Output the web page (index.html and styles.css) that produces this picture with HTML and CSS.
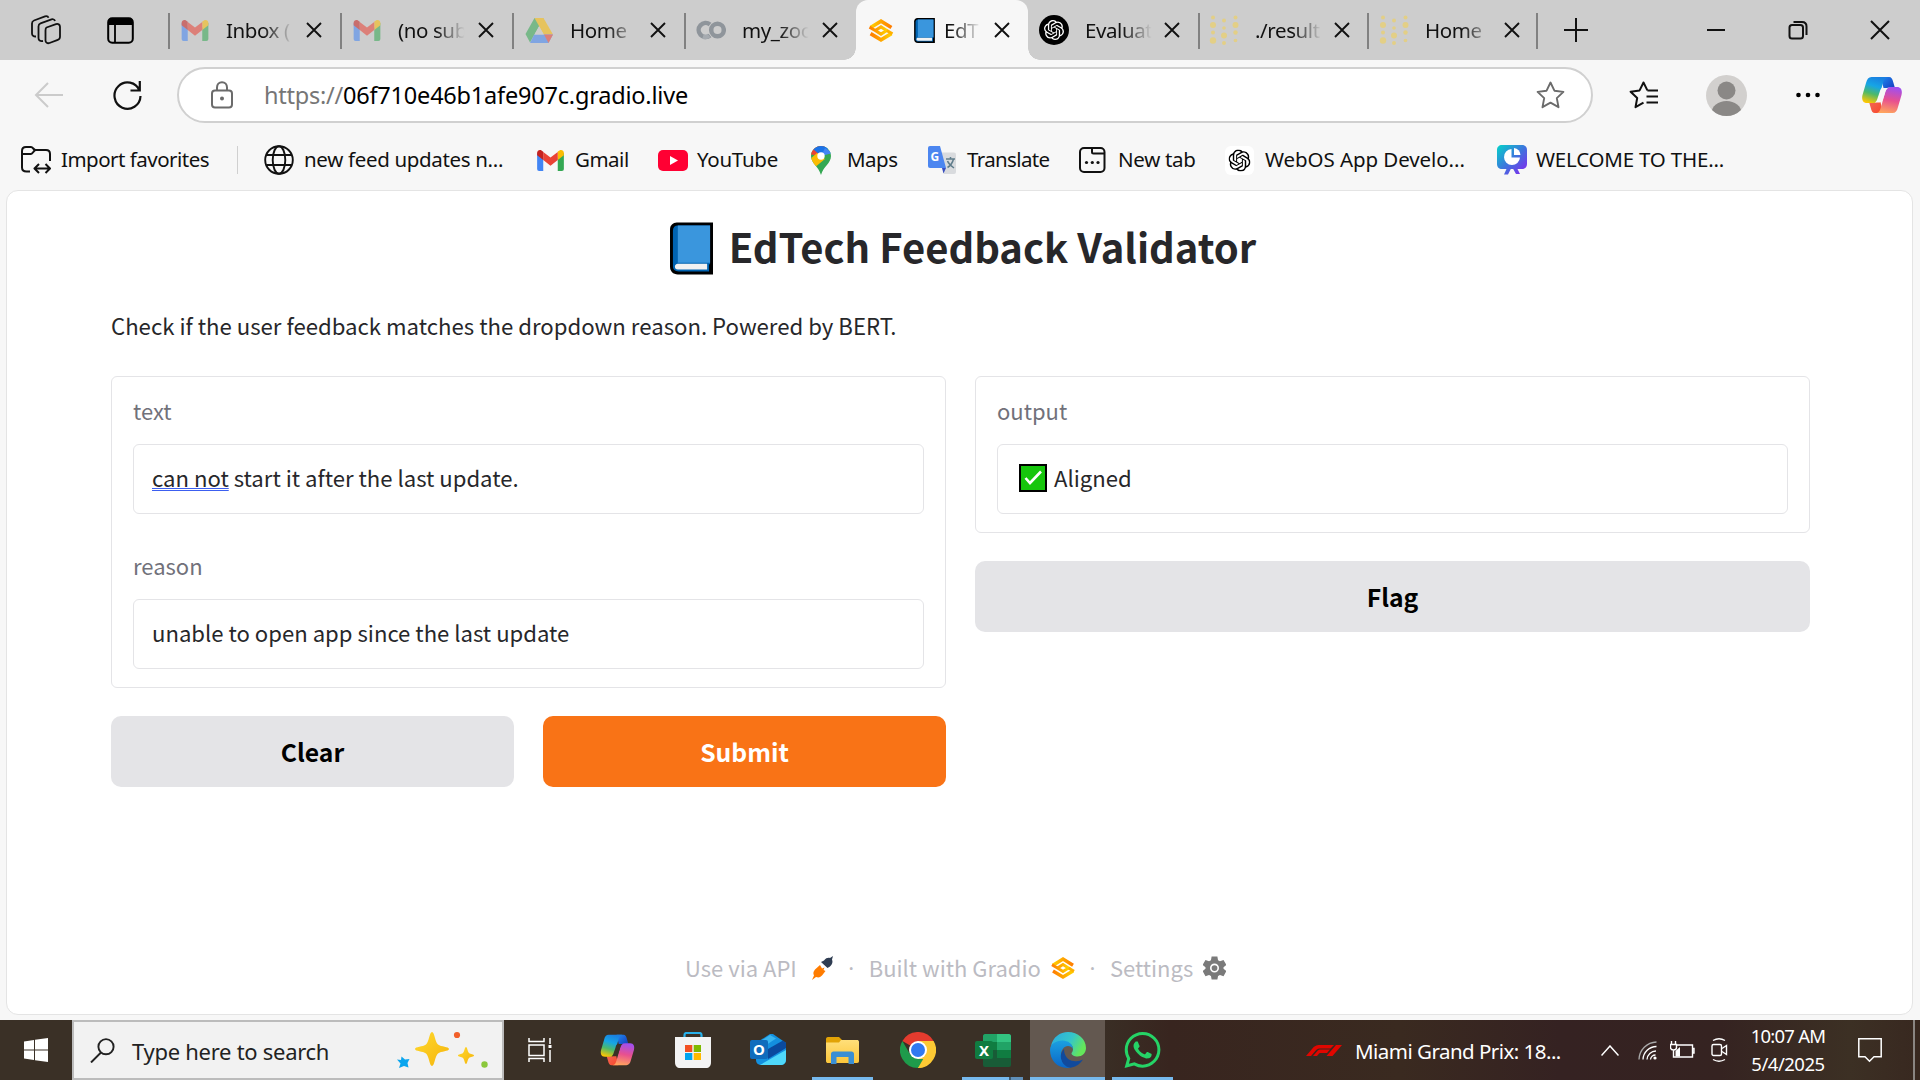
FILE: index.html
```html
<!DOCTYPE html>
<html lang="en">
<head>
<meta charset="utf-8">
<title>EdTech Feedback Validator</title>
<link rel="stylesheet" href="styles.css">
</head>
<body>
<svg class="defs" width="0" height="0">
  <defs>
    <linearGradient id="cp1" x1="0.6" y1="0" x2="0.3" y2="1"><stop offset="0" stop-color="#1a7fe0"/><stop offset=".35" stop-color="#16a5e6"/><stop offset=".65" stop-color="#4cb96a"/><stop offset="1" stop-color="#fbc704"/></linearGradient>
    <linearGradient id="cp2" x1="0.6" y1="0" x2="0.4" y2="1"><stop offset="0" stop-color="#a04ff0"/><stop offset=".5" stop-color="#e8508f"/><stop offset="1" stop-color="#ffa45e"/></linearGradient>
    <linearGradient id="cp3" x1="0" y1="0" x2="1" y2="1"><stop offset="0" stop-color="#1f8af0"/><stop offset="1" stop-color="#1531b8"/></linearGradient>
    <linearGradient id="cp4" x1="0" y1="0" x2="1" y2="1"><stop offset="0" stop-color="#f26a5a"/><stop offset="1" stop-color="#f8462a"/></linearGradient>
    <linearGradient id="pr" x1="0" y1="0" x2="1" y2="1"><stop offset="0" stop-color="#04d3c9"/><stop offset=".5" stop-color="#3d74dd"/><stop offset="1" stop-color="#8a22f0"/></linearGradient>
    <linearGradient id="gr" x1="0" y1="0" x2="1" y2="0"><stop offset="0" stop-color="#ff7c00"/><stop offset="1" stop-color="#ffd000"/></linearGradient>
    <linearGradient id="gr2" x1="0" y1="0" x2="1" y2="0"><stop offset="0" stop-color="#ffd000"/><stop offset="1" stop-color="#ff7c00"/></linearGradient>
    <linearGradient id="ed1" x1="0" y1="0" x2="1" y2=".4"><stop offset="0" stop-color="#2aa9e0"/><stop offset=".6" stop-color="#35c6c9"/><stop offset="1" stop-color="#64e65b"/></linearGradient>
    <linearGradient id="ed2" x1="0" y1="0" x2="0" y2="1"><stop offset="0" stop-color="#1ba0e0"/><stop offset="1" stop-color="#0a66c8"/></linearGradient>
    <linearGradient id="sp" x1="0" y1="0" x2="1" y2="1"><stop offset="0" stop-color="#ffd92e"/><stop offset="1" stop-color="#f5b40c"/></linearGradient>
    <linearGradient id="fo" x1="0" y1="0" x2="0" y2="1"><stop offset="0" stop-color="#ffdf7a"/><stop offset="1" stop-color="#fcc63a"/></linearGradient>
    <symbol id="gmail" viewBox="0 0 28 22"><path d="M0 3v17a2 2 0 0 0 2 2h4.400V8z" fill="#4285f4"/><path d="M21.600 8v14H26a2 2 0 0 0 2-2V3z" fill="#34a853"/><path d="M21.600 1.600V10.600L28 5.500V3c0-2.500-2.600-3.700-4.600-2.500z" fill="#fbbc04"/><path d="M6.400 10.600V2l7.600 5.800L21.600 2v8.600L14 16.500z" fill="#ea4335"/><path d="M0 3v2.500l6.400 5.100V1.900L4.600.5C2.600-.7 0 .5 0 3z" fill="#c5221f"/></symbol>
    <symbol id="x" viewBox="0 0 16 16"><path d="M1 1l14 14M15 1L1 15" fill="none" stroke="#111" stroke-width="1.900"/></symbol>
    <symbol id="copilot" viewBox="0 0 40 38"><path d="M19 1h8c2.500 0 3.500 2 4.200 5l1.600 5.500h-5c-3 0-4.500 1.500-5.500 4z" fill="url(#cp3)"/><path d="M21 37h-8c-2.500 0-3.500-2-4.200-5l-1.600-5.500h5c3 0 4.500-1.500 5.500-4z" fill="url(#cp4)"/><path d="M9.500 1H26c-3 0-4 2.500-5 6l-4 14c-1 4-2.500 6-6 6H5c-4.500 0-5.500-4-4.500-8L4 7c1-4 2.500-6 5.500-6z" fill="url(#cp1)"/><path d="M30.500 37H14c3 0 4-2.500 5-6l4-14c1-4 2.500-6 6-6h6c4.500 0 5.500 4 4.500 8L36 31c-1 4-2.500 6-5.500 6z" fill="url(#cp2)"/><path d="M20.500 12H26c-1.700 1-2.400 3-3 5l-2 6c-.7 2-1.800 3.500-3.500 3.500H13c1.500-1 2.200-3 2.800-5l1.700-5c.7-2.500 1.500-4.500 3-4.500z" fill="currentColor"/></symbol>
    <symbol id="gradio" viewBox="0 0 24 24"><path d="M2 9.200L12 3l10 6.200" fill="none" stroke="url(#gr2)" stroke-width="3.400"/><path d="M22 15L12 21 2 15" fill="none" stroke="url(#gr)" stroke-width="3.400"/><path d="M1 8.800L6.500 12 12 8.500 17.500 12 12 15.500 6.500 12" fill="none" stroke="url(#gr)" stroke-width="2.900"/><path d="M23 15.200L17.500 12" fill="none" stroke="#ffb000" stroke-width="2.900"/></symbol>
    <symbol id="openai" viewBox="0 0 24 24"><path d="M22.2819 9.8211a5.9847 5.9847 0 0 0-.5157-4.9108 6.0462 6.0462 0 0 0-6.5098-2.9A6.0651 6.0651 0 0 0 4.9807 4.1818a5.9847 5.9847 0 0 0-3.9977 2.9 6.0462 6.0462 0 0 0 .7427 7.0966 5.98 5.98 0 0 0 .511 4.9107 6.051 6.051 0 0 0 6.5146 2.9001A5.9847 5.9847 0 0 0 13.2599 24a6.0557 6.0557 0 0 0 5.7718-4.2058 5.9894 5.9894 0 0 0 3.9977-2.9001 6.0557 6.0557 0 0 0-.7475-7.0729zm-9.022 12.6081a4.4755 4.4755 0 0 1-2.8764-1.0408l.1419-.0804 4.7783-2.7582a.7948.7948 0 0 0 .3927-.6813v-6.7369l2.02 1.1686a.071.071 0 0 1 .038.052v5.5826a4.504 4.504 0 0 1-4.4945 4.4944zm-9.6607-4.1254a4.4708 4.4708 0 0 1-.5346-3.0137l.142.0852 4.783 2.7582a.7712.7712 0 0 0 .7806 0l5.8428-3.3685v2.3324a.0804.0804 0 0 1-.0332.0615L9.74 19.9502a4.4992 4.4992 0 0 1-6.1408-1.6464zM2.3408 7.8956a4.485 4.485 0 0 1 2.3655-1.9728V11.6a.7664.7664 0 0 0 .3879.6765l5.8144 3.3543-2.0201 1.1685a.0757.0757 0 0 1-.071 0l-4.8303-2.7865A4.504 4.504 0 0 1 2.3408 7.872zm16.5963 3.8558L13.1038 8.364 15.1192 7.2a.0757.0757 0 0 1 .071 0l4.8303 2.7913a4.4944 4.4944 0 0 1-.6765 8.1042v-5.6772a.79.79 0 0 0-.407-.667zm2.0107-3.0231l-.142-.0852-4.7735-2.7818a.7759.7759 0 0 0-.7854 0L9.409 9.2297V6.8974a.0662.0662 0 0 1 .0284-.0615l4.8303-2.7866a4.4992 4.4992 0 0 1 6.6802 4.66zM8.3065 12.863l-2.02-1.1638a.0804.0804 0 0 1-.038-.0567V6.0742a4.4992 4.4992 0 0 1 7.3757-3.4537l-.142.0805L8.704 5.459a.7948.7948 0 0 0-.3927.6813zm1.0976-2.3654l2.602-1.4998 2.6069 1.4998v2.9994l-2.5974 1.4997-2.6067-1.4997Z"/></symbol>
    <symbol id="dots" viewBox="0 0 28 30"><g fill="#e3cf86"><circle cx="3" cy="2.500" r="2"/><circle cx="3" cy="10" r="3"/><circle cx="3" cy="17.500" r="2"/><circle cx="3" cy="25.500" r="3.200"/><circle cx="14" cy="5.500" r="2"/><circle cx="14" cy="13" r="1.800"/><circle cx="14" cy="20.500" r="3"/><circle cx="14" cy="28" r="2"/><circle cx="25.500" cy="2.500" r="2"/><circle cx="25.500" cy="10" r="3"/><circle cx="25.500" cy="17.500" r="2.200"/><circle cx="25.500" cy="25.500" r="1.800"/></g></symbol>
    <symbol id="book" viewBox="0 0 44 53"><path d="M7 0h37v53H8C3 53 0 50 0 45V7C0 3 3 0 7 0z" fill="#000"/><path d="M8 3h33v39l-1 1v7H9c-4 0-6-2-6-5V8c0-3 2-5 5-5z" fill="#0063b1"/><path d="M8 3h33v38H9c-1 0-1 0-1 1z" fill="#3a96dd"/><path d="M8 42h30v6H8c-4 0-4-6 0-6z" fill="#f2f2f2"/></symbol>
  </defs>
</svg>

<header class="browser">
  <div class="tabstrip">
    <div class="tabtools">
      <svg width="30" height="30" viewBox="0 0 30 30" fill="none" stroke="#111" stroke-width="1.800" stroke-linejoin="round"><path d="M15.500 12.500l9.500-3.300c2-.7 4 .3 4 2.500v10c0 1.500-.8 2.600-2.200 3.100l-8.300 3.200c-2 .8-4-.4-4-2.500v-10c0-1.400 0-2.500 1-3z"/><path d="M12 26c-3 .6-4.500-.8-4.500-3V11.500c0-1.500.6-2.600 2-3.100l11-4c1.500-.5 3 .1 3.500 1.600"/><path d="M5 21.500c-2.500.2-4-1-4-3V8.500C1 7 1.600 6 3 5.500L14 1.300c1.600-.5 3 0 3.500 1.500"/></svg>
      <svg width="27" height="27" viewBox="0 0 27 27"><rect x="1.200" y="1.200" width="24.600" height="24.600" rx="4" fill="none" stroke="#000" stroke-width="2"/><path d="M1 8V5c0-2.500 1.500-4 4-4h17c2.500 0 4 1.500 4 4v3z"/><path d="M8 8v18" stroke="#000" stroke-width="1.800"/></svg>
    </div>
    <div class="tabs">
      <div class="tab"><svg class="fav dim" width="28" height="21"><use href="#gmail"/></svg><span class="tt">Inbox (</span><svg class="close"><use href="#x"/></svg></div>
      <div class="tab"><svg class="fav dim" width="28" height="21"><use href="#gmail"/></svg><span class="tt">(no sub</span><svg class="close"><use href="#x"/></svg></div>
      <div class="tab"><svg class="fav dim" width="28" height="25" viewBox="0 0 28 25"><path d="M9.500 0h9L14 8.500 5 24.500.5 16z" fill="#34a853"/><path d="M18.500 0L28 16.500H18.800L9.500 0z" fill="#fbbc04"/><path d="M9.200 16.500H28L23.500 25H5z" fill="#4285f4"/><path d="M19 16.500h9L23.500 25z" fill="#ea4335"/><path d="M14 8.500l4.700 8H9.400z" fill="#cdcdcd"/></svg><span class="tt">Home</span><svg class="close"><use href="#x"/></svg></div>
      <div class="tab"><svg class="fav" width="30" height="20" viewBox="0 0 30 20" fill="none" stroke-width="4.500"><path d="M14 4.500A7 7 0 1 0 14 15.500" stroke="#8f959b"/><circle cx="21.500" cy="10" r="6.300" stroke="#8f959b"/><path d="M7 16.500a6.500 6.500 0 0 0 6-1" stroke="#a6abb0"/></svg><span class="tt">my_zoo</span><svg class="close"><use href="#x"/></svg></div>
      <div class="tab active"><svg class="fav" width="26" height="25"><use href="#gradio"/></svg><span class="tt"><svg class="tbook" width="21" height="25"><use href="#book"/></svg>EdT</span><svg class="close"><use href="#x"/></svg></div>
      <div class="tab w2 first"><svg class="fav" width="30" height="30" viewBox="0 0 30 30"><circle cx="15" cy="15" r="15"/><use href="#openai" x="5" y="5" width="20" height="20" fill="#fff"/></svg><span class="tt">Evaluat</span><svg class="close"><use href="#x"/></svg></div>
      <div class="tab w2"><svg class="fav" width="28" height="30"><use href="#dots"/></svg><span class="tt">./result</span><svg class="close"><use href="#x"/></svg></div>
      <div class="tab w2 last"><svg class="fav" width="28" height="30"><use href="#dots"/></svg><span class="tt">Home</span><svg class="close"><use href="#x"/></svg></div>
    </div>
    <svg class="plus" width="26" height="26" viewBox="0 0 26 26"><path d="M13 1v24M1 13h24" stroke="#111" stroke-width="2"/></svg>
    <div class="winctl">
      <svg width="20" height="20" viewBox="0 0 20 20"><path d="M1 10h18" stroke="#111" stroke-width="2"/></svg>
      <svg width="20" height="20" viewBox="0 0 20 20" fill="none" stroke="#111" stroke-width="2"><rect x="1.500" y="5" width="13.500" height="13.500" rx="2.500"/><path d="M5.500 2h8.500c3 0 4.500 1.500 4.500 4.500V15"/></svg>
      <svg width="20" height="20" viewBox="0 0 20 20"><path d="M1 1l18 18M19 1L1 19" stroke="#111" stroke-width="2"/></svg>
    </div>
  </div>

  <div class="toolbar">
    <svg class="back" width="30" height="26" viewBox="0 0 30 26" fill="none" stroke="#cbcbcb" stroke-width="2"><path d="M29 13H2M14 1L2 13l12 12"/></svg>
    <svg class="reload" width="30" height="30" viewBox="0 0 30 30" fill="none" stroke="#111" stroke-width="2.200"><path d="M27.500 10.500A13 13.200 0 1 0 28.500 16M27.800 1v9.500H18.500"/></svg>
    <div class="urlbar">
      <svg width="22" height="28" viewBox="0 0 22 28" fill="none" stroke="#6b6b6b" stroke-width="2"><rect x="1" y="9.500" width="20" height="17" rx="3"/><path d="M6 9V6.500C6 3.500 8 1.200 11 1.200s5 2.300 5 5.300V9"/><circle cx="11" cy="17.500" r="1" fill="#6b6b6b"/></svg>
      <span class="url"><span class="scheme">https://</span><span class="host">06f710e46b1afe907c.gradio.live</span></span>
      <svg width="29" height="28" viewBox="0 0 29 28" fill="none" stroke="#6b6b6b" stroke-width="1.900" stroke-linejoin="round"><path d="M14.500 1.500l3.900 8.200 9 1.200-6.600 6.200 1.700 9.100-8-4.500-8 4.500 1.700-9.100L1.600 10.900l9-1.200z"/></svg>
    </div>
    <svg class="favs" width="30" height="28" viewBox="0 0 30 28" fill="none" stroke="#111" stroke-width="2" stroke-linejoin="round"><path d="M18.400 9.400L14.500 1.500l-3.900 7.900-9 1.300 6.600 6.300-1.700 9.200 8-4.600M18.400 9.400H29M17.500 15.500H29M17.500 21.500H29"/></svg>
    <svg class="avatar" width="41" height="41" viewBox="0 0 41 41"><defs><clipPath id="av"><circle cx="20.500" cy="20.500" r="20.500"/></clipPath></defs><g clip-path="url(#av)"><rect width="41" height="41" fill="#d2d0ce"/><circle cx="20.500" cy="15.500" r="9" fill="#8a8886"/><ellipse cx="20.500" cy="38" rx="15" ry="12" fill="#8a8886"/></g></svg>
    <svg class="more" width="24" height="6" viewBox="0 0 24 6"><circle cx="2.500" cy="3" r="2.300"/><circle cx="12" cy="3" r="2.300"/><circle cx="21.500" cy="3" r="2.300"/></svg>
    <svg class="cop" width="40" height="38"><use href="#copilot"/></svg>
  </div>

  <nav class="bookmarks">
    <a class="bm b0"><svg width="30" height="28" viewBox="0 0 30 28" fill="none" stroke="#111" stroke-width="2" stroke-linejoin="round"><path d="M9 25.500H5.500c-2.500 0-4.500-1.500-4.500-4V5c0-2.500 1.500-4 4-4h5c2 0 2.500 3 4.500 3H25c2.500 0 4 1.500 4 4v7"/><path d="M1 8h9c2 0 2.500-3.500 4.500-4M14 22.500h14M18 18l-4.500 4.500L18 27M24.500 18l4.500 4.500L24.500 27"/></svg><span>Import favorites</span></a>
    <span class="bsep"></span>
    <a class="bm b1"><svg width="30" height="30" viewBox="0 0 30 30" fill="none" stroke="#111" stroke-width="1.900"><circle cx="15" cy="15" r="13.800"/><ellipse cx="15" cy="15" rx="6.300" ry="13.800"/><path d="M2.500 10h25M2.500 20h25"/></svg><span>new feed updates n...</span></a>
    <a class="bm b2"><svg width="27" height="21"><use href="#gmail"/></svg><span>Gmail</span></a>
    <a class="bm b3"><svg width="30" height="21" viewBox="0 0 30 21"><rect width="30" height="21" rx="5" fill="#f03"/><path d="M12 6l8 4.500-8 4.500z" fill="#fff"/></svg><span>YouTube</span></a>
    <a class="bm b4"><svg width="20" height="29" viewBox="0 0 20 29"><defs><clipPath id="pin"><path d="M10 0c5.500 0 10 4.500 10 10 0 7.500-7.500 10-10 19C7.500 20 0 17.500 0 10 0 4.500 4.500 0 10 0z"/></clipPath></defs><g clip-path="url(#pin)"><rect width="20" height="29" fill="#34a853"/><path d="M0 0h14L10 10-4 8z" fill="#ea4335"/><path d="M2 3L10-2l8 4-8 8z" fill="#1a73e8"/><path d="M14 2l8 5-12 3z" fill="#4285f4"/><path d="M-2 14L6 7l8 6-11 9z" fill="#fbbc04"/></g><circle cx="10" cy="10" r="3.700" fill="#fff"/></svg><span>Maps</span></a>
    <a class="bm b5"><svg width="28" height="28" viewBox="0 0 28 28"><path d="M10 6.500h16a2 2 0 0 1 2 2V26a2 2 0 0 1-2 2H16z" fill="#d9dbde"/><path d="M14 22h4l-2.500 5.500z" fill="#3a4fbf"/><path d="M2 0h10l6 22H2a2 2 0 0 1-2-2V2a2 2 0 0 1 2-2z" fill="#4c86f0"/><text x="2.500" y="15" class="glyph" font-size="12" fill="#fff">G</text><path d="M18 13h9M22.500 11v2M25.500 13c-1 4-3.500 7-6 8.500M19.500 15c1 2.500 3.500 5 6.500 7" stroke="#607d8b" stroke-width="1.500" fill="none"/></svg><span>Translate</span></a>
    <a class="bm b6"><svg width="27" height="26" viewBox="0 0 27 26" fill="none" stroke="#111" stroke-width="2"><rect x="1" y="1" width="24.500" height="24" rx="4"/><path d="M13 1v4c0 1 .5 1.500 1.500 1.500h11"/><g fill="#111" stroke="none"><circle cx="7.500" cy="15.500" r="1.600"/><circle cx="13.300" cy="15.500" r="1.600"/><circle cx="19" cy="15.500" r="1.600"/></g></svg><span>New tab</span></a>
    <a class="bm b7"><svg width="29" height="29" viewBox="0 0 29 29"><rect width="29" height="29" rx="6" fill="#fff"/><use href="#openai" x="3.500" y="3.500" width="22" height="22"/></svg><span>WebOS App Develo...</span></a>
    <a class="bm b8"><svg width="30" height="30" viewBox="0 0 30 30"><path d="M5 0h20c3 0 5 2 5 5v14c0 3-2 5-5 5h-4.500l2.500 5h-4l-2.800-5h-2.400L11 29.500H7L9.500 24H5c-3 0-5-2-5-5V5c0-3 2-5 5-5z" fill="url(#pr)"/><path d="M14.500 4v8.500H23a8 8 0 1 1-8.500-8.500z" fill="#fff"/><path d="M17 3a7 7 0 0 1 6.500 7H17z" fill="#fff"/></svg><span>WELCOME TO THE...</span></a>
  </nav>
</header>

<main class="page">
  <h1 class="title"><svg width="43" height="53" preserveAspectRatio="none"><use href="#book"/></svg><span>EdTech Feedback Validator</span></h1>
  <p class="desc">Check if the user feedback matches the dropdown reason. Powered by BERT.</p>
  <div class="cols">
    <section class="col">
      <div class="panel">
        <div class="field"><label>text</label><div class="input"><span><span class="grammar">can not</span> start it after the last update.</span></div></div>
        <div class="field"><label>reason</label><div class="input"><span>unable to open app since the last update</span></div></div>
      </div>
      <div class="btns"><button class="btn">Clear</button><button class="btn primary">Submit</button></div>
    </section>
    <section class="col">
      <div class="panel">
        <div class="field"><label>output</label><div class="input"><svg class="check" width="28" height="28" viewBox="0 0 28 28"><rect x="1" y="1" width="26" height="26" fill="#16c60c" stroke="#000" stroke-width="2"/><path d="M6.500 14l4.500 5L22 7.500" fill="none" stroke="#fff" stroke-width="2.600"/></svg><span>Aligned</span></div></div>
      </div>
      <button class="btn">Flag</button>
    </section>
  </div>
  <footer class="foot">
    <span>Use via API</span>
    <svg class="f1" width="22" height="24" viewBox="0 0 22 24"><path d="M12 4.500c2-2.500 4-3 6-2.500L21 0l-1 3.500c1 2.500.5 4.500-2 7l-2.500 1.500L9 6z" fill="#2f3d52"/><path d="M8 9l-5 4.500c-2 2.500-2 4-1 6L0 24l4-3c2.500 1 4 .5 6-1.500l3.500-4.500-2-1 1-2.500-2.500 1z" fill="#ff7c00"/></svg>
    <span class="dot">·</span>
    <span>Built with Gradio</span>
    <svg class="f2" width="24" height="24"><use href="#gradio"/></svg>
    <span class="dot">·</span>
    <span>Settings</span>
    <svg class="f3" width="23" height="24" viewBox="0 0 24 24"><path fill="#7a7a7a" fill-rule="evenodd" d="M9 0h6l.7 3.800 2 1.100L21.400 3.600l3 5.200-3 2.500v1.500l3 2.500-3 5.200-3.700-1.300-2 1.100L15 24H9l-.7-3.700-2-1.100-3.700 1.300-3-5.200 3-2.500v-1.500l-3-2.500 3-5.200 3.700 1.300 2-1.100zM12 7.300a4.700 4.700 0 1 0 0 9.400 4.700 4.700 0 0 0 0-9.400z"/><circle cx="12" cy="12" r="3" fill="#7a7a7a"/></svg>
  </footer>
</main>

<div class="taskbar">
  <div class="start"><svg width="24" height="24" viewBox="0 0 24 24" fill="#fff"><path d="M0 3.400l10-1.400v9.500H0zM11 1.800L24 0v11.500H11zM0 12.500h10V22L0 20.600zM11 12.500h13V24l-13-1.800z"/></svg></div>
  <div class="search"><svg width="25" height="25" viewBox="0 0 25 25" fill="none" stroke="#222" stroke-width="1.900"><circle cx="16" cy="8.700" r="7.600"/><path d="M11 14.500L1 24.500"/></svg><span>Type here to search</span>
    <svg class="sparkles" width="92" height="38" viewBox="0 0 92 38"><path d="M35 1c2.500 0 3 10 6 12.500S52 15.500 52 18s-8 2-11 4.500S37.500 35 35 35s-3-10-6-12.500S18 20.500 18 18s8-2 11-4.500S32.500 1 35 1z" fill="url(#sp)"/><path d="M69 16c1.300 0 1.500 4.500 3 6s5 1 5 2.500-3.500 1-5 2.500-1.700 6-3 6-1.500-4.500-3-6-5-1-5-2.500 3.500-1 5-2.500 1.700-6 3-6z" fill="url(#sp)"/><path d="M4.500 25.500l3.500 3 4.500-.5-2 4 1 4.500-4.500-1.500-5 2 1.500-4.500L0 28.500l4 .5z" fill="#0aa5ee"/><circle cx="60" cy="4" r="3.100" fill="#f2602a"/><circle cx="87.500" cy="33.500" r="3.200" fill="#8bc83c"/></svg>
  </div>
  <div class="apps">
    <span class="app"><svg width="24" height="24" viewBox="0 0 24 24" fill="none" stroke="#fff" stroke-width="1.500"><path d="M1 0v3.500h15V0M1 24v-3.500h15V24"/><rect x="1" y="7" width="15" height="10.500"/><path d="M22 0v6M22 12v12"/><path d="M20.500 8.500h3" stroke-width="3"/></svg></span>
    <span class="app"><svg class="cop2" width="35" height="32"><use href="#copilot"/></svg></span>
    <span class="app"><svg width="36" height="36" viewBox="0 0 36 36"><path d="M9.500 6V3c0-1.500.5-2 2-2h13c1.500 0 2 .5 2 2v3" fill="none" stroke="#27b0ea" stroke-width="2.200"/><path d="M0 5h36v25c0 4-2 6-5 6H5c-3 0-5-2-5-6z" fill="#f3f3f3"/><path d="M10 13h7.300v7H10z" fill="#f25022"/><path d="M18.700 13H26v7h-7.300z" fill="#7fba00"/><path d="M10 21h7.300v7H10z" fill="#00a4ef"/><path d="M18.700 21H26v7h-7.300z" fill="#ffb900"/></svg></span>
    <span class="app"><svg width="36" height="32" viewBox="0 0 36 32"><path d="M6 9L20 0c1-.5 2-.5 3 0l13 9v16c0 4-2 6-6 6H12c-4 0-6-2-6-5z" fill="#1390df"/><path d="M6 10L20 1l6 3.500L10 15z" fill="#39b5f0"/><path d="M18 15l15-8.500L36 9v5L18 25z" fill="#0a4a9e"/><path d="M10 31l26-15v9c0 4-2 6-6 6z" fill="#4fd8fa"/><rect y="6" width="18" height="19" rx="2" fill="#0f6cbd"/><text x="9" y="21" text-anchor="middle" class="glyph" font-size="15" fill="#fff">O</text></svg></span>
    <span class="app open"><svg width="33" height="27" viewBox="0 0 33 27"><path d="M0 2C0 1 .5 0 2 0h11l3 3v5H0z" fill="#e2a306"/><path d="M0 5.500h13l2-2.500h16c1 0 2 .5 2 2v19c0 1-.5 2-2 2H2c-1 0-2-.5-2-2z" fill="url(#fo)"/><path d="M5 27V17c0-1.500 1-2.500 2.500-2.500h18c1.500 0 2.500 1 2.500 2.500v10h-5.500v-7h-12v7z" fill="#3a8fd4"/></svg></span>
    <span class="app"><svg width="36" height="36" viewBox="0 0 36 36"><path d="M18 18L2.400 9A18 18 0 0 1 33.600 9z" fill="#e33b2e"/><path d="M18 18V9h15.600A18 18 0 0 1 18 36z" fill="#fcc934"/><path d="M2.400 9L10.200 22.500 18 27h7.800L18 36A18 18 0 0 1 2.400 9z" fill="#1e9b4b"/><path d="M25.800 22.500L18 36c4-.1 8-1.500 11-4.500z" fill="#fcc934"/><circle cx="18" cy="18" r="9" fill="#fff"/><circle cx="18" cy="18" r="7" fill="#3079f0"/></svg></span>
    <span class="app open multi"><svg width="36" height="33" viewBox="0 0 36 33"><rect x="8" width="28" height="33" rx="2" fill="#185c37"/><path d="M8 2c0-1 1-2 2-2h12v8H8z" fill="#21a366"/><path d="M22 0h12c1 0 2 1 2 2v6H22z" fill="#33c481"/><path d="M8 8h14v8H8z" fill="#107c41"/><path d="M22 8h14v8H22z" fill="#21a366"/><path d="M22 16h14v8H22z" fill="#107c41"/><rect y="7" width="18" height="18" rx="2" fill="#107c41"/><text x="9" y="21.500" text-anchor="middle" class="glyph" font-size="15" fill="#fff">X</text></svg></span>
    <span class="app open current"><svg width="36" height="36" viewBox="0 0 36 36"><path d="M1 14C3 5 10 0 18 0c10 0 18 7 18 16 0 5-4 8.500-8.500 8.500-3.500 0-6-1.500-6-3 0-1 1.500-1.500 1.500-4.500 0-4-4-7-9-7-6 0-10 2-13 4z" fill="url(#ed1)"/><path d="M0 18C0 12 6 8.500 12.500 8.500 18 8.500 23 12 23 17c-1-2-3-3-5-3-4 0-7 4-7 9 0 6 4 11 10 12.600C9 38 0 29 0 18z" fill="url(#ed2)"/><path d="M14 17c-3 3-4 7-2.500 11 1.500 5 6 8 10 7.600 5-1 9-4 11.500-8-3 1.500-6 2-9 1.500-6-.6-10-5-10-12.100z" fill="#114a9c"/></svg></span>
    <span class="app open"><svg width="37" height="36" viewBox="0 0 24 24" fill="#25d366"><path d="M17.472 14.382c-.297-.149-1.758-.867-2.030-.967-.273-.099-.471-.148-.67.15-.197.297-.767.966-.94 1.164-.173.199-.347.223-.644.075-.297-.15-1.255-.463-2.390-1.475-.883-.788-1.480-1.761-1.653-2.059-.173-.297-.018-.458.13-.606.134-.133.298-.347.446-.52.149-.174.198-.298.298-.497.099-.198.05-.371-.025-.52-.075-.149-.669-1.612-.916-2.207-.242-.579-.487-.5-.669-.51-.173-.008-.371-.01-.57-.01-.198 0-.52.074-.792.372-.272.297-1.040 1.016-1.040 2.479 0 1.462 1.065 2.875 1.213 3.074.149.198 2.096 3.200 5.077 4.487.709.306 1.262.489 1.694.625.712.227 1.360.195 1.871.118.571-.085 1.758-.719 2.006-1.413.248-.694.248-1.289.173-1.413-.074-.124-.272-.198-.57-.347m-5.421 7.403h-.004a9.870 9.870 0 0 1-5.031-1.378l-.361-.214-3.741.982.998-3.648-.235-.374a9.860 9.860 0 0 1-1.510-5.260c.001-5.450 4.436-9.884 9.888-9.884 2.640 0 5.122 1.030 6.988 2.898a9.825 9.825 0 0 1 2.893 6.994c-.003 5.450-4.437 9.884-9.885 9.884m8.413-18.297A11.815 11.815 0 0 0 12.050 0C5.495 0 .16 5.335.157 11.892c0 2.096.547 4.142 1.588 5.945L.057 24l6.305-1.654a11.882 11.882 0 0 0 5.683 1.448h.005c6.554 0 11.890-5.335 11.893-11.893a11.821 11.821 0 0 0-3.480-8.413z"/></svg></span>
  </div>
  <div class="news"><svg width="36" height="11" viewBox="0 0 36 11" fill="#e10600"><path d="M0 11L6 4C8.500 1 10 0 14 0h14l-3.500 3.500H15c-3 0-4 .5-5.500 2.300L5 11z"/><path d="M7 11l3.500-4C12 5 13 4.500 15 4.500h9L21 8h-6c-1.200 0-1.700.2-2.500 1.200L11 11zM30 0h6l-9.500 11h-6z"/></svg><span>Miami Grand Prix: 18...</span></div>
  <div class="tray">
    <svg class="t1" width="18" height="11" viewBox="0 0 18 11" fill="none" stroke="#fff" stroke-width="1.500"><path d="M.5 10.500L9 1l8.500 9.500"/></svg>
    <svg class="t2" width="19" height="19" viewBox="0 0 19 19" fill="none" stroke="#fff" stroke-width="1.300"><path d="M12.500 18.500a5 5 0 0 1 5-4.500M9 18.500A9 9 0 0 1 18 10M5 18.500A13.500 13.500 0 0 1 18.500 5.500" /><path d="M1 18.500A18 18 0 0 1 18.500 1" stroke="#aaa"/><circle cx="17" cy="17" r="1.600" fill="#fff" stroke="none"/></svg>
    <svg class="t3" width="25" height="18" viewBox="0 0 25 18" fill="none" stroke="#fff" stroke-width="1.400"><path d="M7 4h15.500v12H5.500M22.500 7.500H24v4.500h-1.500M1.500 0v3M5.500 0v3M.5 3.500h6v3c0 1.500-1 2.500-3 2.500S.5 8 .5 6.500zM3.500 9v7H6"/><path d="M5.500 10l4.500-4v9.500H5.500z" fill="#fff" stroke="none"/></svg>
    <svg class="t4" width="17" height="24" viewBox="0 0 17 24" fill="none" stroke="#fff" stroke-width="1.400"><rect x="1" y="6.500" width="9.500" height="11" rx="1.500"/><path d="M11 10.500l4.500-3v9l-4.500-3M2 2.500C5.500.5 10.500.5 14 2.500M2 21.500c3.500 2 8.500 2 12 0"/></svg>
    <div class="clock"><span>10:07 AM</span><span>5/4/2025</span></div>
    <svg class="t5" width="24" height="25" viewBox="0 0 24 25" fill="none" stroke="#fff" stroke-width="1.500"><path d="M.8.800h22.400v18H16l-4.500 4.500L7 18.800H.8z"/></svg>
    <span class="desk"></span>
  </div>
</div>
</body>
</html>
```
FILE: styles.css
```css
* { box-sizing: border-box; }
html, body { margin: 0; height: 100%; overflow: hidden; }
body { width: 1920px; height: 1080px; background: #f7f7f7; display: flex; flex-direction: column; font-family: "Noto Sans", "Open Sans", sans-serif; color: #111; }
svg { display: block; flex: none; }
span { white-space: nowrap; }
.defs { position: absolute; }
.glyph { font-family: "Noto Sans", sans-serif; font-weight: 700; }

.browser { flex: none; height: 190px; }
.tabstrip { height: 60px; background: #cdcdcd; display: flex; align-items: center; }
.tabtools { width: 168px; display: flex; align-items: center; gap: 46px; padding-left: 31px; }
.tabs { display: flex; height: 60px; width: 1369px; }
.tab { position: relative; width: 172px; display: flex; align-items: center; padding-left: 12px; flex: none; }
.tab::before { content: ""; position: absolute; left: 0; top: 13px; width: 2px; height: 36px; background: #818181; }
.tab.w2 { width: 169px; padding-left: 11px; }
.tab.w2.first { width: 170px; }
.tab.w2.last { width: 170px; padding-left: 12px; }
.tab.active { background: #f7f7f7; border-radius: 12px 12px 0 0; }
.tab.active::before { left: -12px; top: auto; bottom: 0; width: 196px; height: 12px; background: radial-gradient(circle at 0 0, transparent 11.500px, #f7f7f7 12px) left / 12px 12px no-repeat, radial-gradient(circle at 100% 0, transparent 11.500px, #f7f7f7 12px) right / 12px 12px no-repeat; }
.tab.first::before { display: none; }
.tab.last::after { content: ""; position: absolute; right: -1px; top: 13px; width: 2px; height: 36px; background: #818181; }
.fav { width: 30px; }
.dim { opacity: .55; }
.tt { font-size: 20.500px; width: 68px; height: 30px; line-height: 30px; margin-left: 16px; overflow: hidden; letter-spacing: -.4px; -webkit-mask-image: linear-gradient(90deg, #000 55%, transparent 98%); mask-image: linear-gradient(90deg, #000 55%, transparent 98%); }
.tbook { display: inline-block; vertical-align: -5px; margin-right: 9px; }
.active .fav { margin-left: -2px; }
.active .tt { margin-left: 18px; }
.close { width: 16px; height: 16px; margin-left: 12px; }
.w2 .close { margin-left: 11px; }
.plus { margin-left: 26px; }
.winctl { margin-left: auto; display: flex; gap: 62px; padding-right: 30px; }

.toolbar { height: 70px; display: flex; align-items: center; }
.back { margin-left: 34px; }
.reload { margin-left: 48px; }
.urlbar { margin-left: 35px; width: 1416px; height: 56px; border: 2px solid #d0d0d0; border-radius: 28px; background: #fff; display: flex; align-items: center; padding: 0 26px 0 32px; }
.url { flex: 1; margin-left: 31px; font-size: 23.500px; color: #000; }
.scheme { color: #767676; letter-spacing: -.25px; }
.host { letter-spacing: -.2px; }
.favs { margin-left: 36px; }
.avatar { margin-left: 47px; }
.more { margin-left: 49px; }
.cop { margin-left: 42px; color: #f7f7f7; }

.bookmarks { height: 60px; display: flex; align-items: center; padding-left: 21px; font-size: 20.500px; }
.bm { display: flex; align-items: center; gap: 11px; flex: none; }
.bm span { margin-top: -2px; }
.b0 { width: 216px; gap: 10px; letter-spacing: -.51px; }
.bsep { width: 1px; height: 28px; background: #d0d0d0; margin-right: 26px; }
.b1 { width: 273px; gap: 10px; letter-spacing: -.33px; }
.b2 { width: 121px; letter-spacing: -.5px; }
.b3 { width: 153px; gap: 9px; letter-spacing: -.27px; }
.b4 { width: 117px; gap: 16px; letter-spacing: -.5px; }
.b5 { width: 151px; letter-spacing: -.63px; }
.b6 { width: 146px; gap: 12px; letter-spacing: -.3px; }
.b7 { width: 272px; letter-spacing: -.08px; }
.b8 { gap: 9px; letter-spacing: -.2px; }

.page { margin: 0 7px 0 6px; height: 825px; flex: none; background: #fff; border-radius: 12px; border: 1px solid #e4e4e4; padding: 31px 103px 0 104px; font-family: "Noto Sans CJK SC", "Noto Sans CJK JP", sans-serif; color: #27272a; display: flex; flex-direction: column; }
.title { margin: 0; height: 53px; font-size: 40px; font-weight: 700; line-height: 48px; display: flex; justify-content: center; gap: 16px; padding-left: 6px; }
.desc { margin: 35px 0 0; height: 36px; line-height: 30px; font-size: 22.180px; }
.cols { display: grid; grid-template-columns: 835px 835px; gap: 29px; margin-top: 30px; }
.col { display: flex; flex-direction: column; gap: 28px; }
.panel { border: 1px solid #e4e4e7; border-radius: 6px; padding: 18px 21px; display: flex; flex-direction: column; gap: 36px; }
.field label { display: block; height: 36px; line-height: 30px; font-size: 22px; color: #71717a; margin-bottom: 13px; }
.input { height: 70px; border: 1px solid #e4e4e7; border-radius: 6px; padding: 0 18px 5px; display: flex; align-items: center; font-size: 22.120px; }
.grammar { text-decoration: underline double #3c5ff0 1px; text-underline-offset: 1px; text-decoration-skip-ink: none; }
.check { margin: 2px 7px 0 3px; }
.btns { display: grid; grid-template-columns: 1fr 1fr; gap: 29px; }
.btn { height: 71px; border: 0; border-radius: 10px; background: #e4e4e7; font: 700 24.700px "Noto Sans CJK SC", sans-serif; color: #000; padding: 0 0 2px; }
.btn.primary { background: #f97316; color: #fff; }
.foot { margin-top: auto; margin-bottom: 28px; padding-left: 574px; height: 36px; display: flex; align-items: center; font-size: 22px; color: #bbbbc2; }
.foot span { margin-top: -2px; }
.f1 { margin-left: 15px; }
.f2 { margin-left: 10px; }
.f3 { margin-left: 10px; }
.foot .dot { width: 35px; text-align: center; font-family: "Noto Sans", sans-serif; }

.taskbar { margin-top: 5px; height: 60px; flex: none; display: flex; color: #fff; background: linear-gradient(90deg, #3a3026 0, #3a3026 1090px, #38251f 1170px, #3a2a20 1400px, #352222 1560px, #352321 1720px, #3c3024 1850px, #382820 1920px); }
.start { width: 72px; display: grid; place-items: center; }
.search { width: 432px; border: 2px solid #bcbcbc; background: #f2f2f2; display: flex; align-items: center; padding-left: 16px; color: #222; font-size: 22px; letter-spacing: -.28px; }
.search span { margin: 2px 0 0 17px; }
.sparkles { margin-left: auto; margin-right: 13px; }
.apps { display: grid; grid-template-columns: 76px repeat(8, 75px); }
.app { position: relative; display: grid; place-items: center; }
.app:first-child { padding-right: 4px; }
.open::after { content: ""; position: absolute; left: 7px; right: 7px; bottom: 0; height: 3px; background: #76b9ed; }
.multi::after { background: linear-gradient(90deg, #76b9ed 47px, #3f5a70 47px, #3f5a70 49px, #5f8fb8 49px); }
.current { background: #635850; }
.current::after { left: 0; right: 0; }
.cop2 { color: #3a3026; }
.news { display: flex; align-items: center; gap: 13px; margin-left: 126px; font-size: 20.500px; letter-spacing: -.53px; }
.news span { margin-top: 2px; }
.tray { display: flex; align-items: center; margin-left: auto; padding-right: 5px; }
.t2 { margin-left: 19px; }
.t3 { margin-left: 13px; }
.t4 { margin-left: 16px; }
.clock { width: 76px; margin-left: 22px; display: flex; flex-direction: column; align-items: center; font-size: 18.500px; line-height: 28px; letter-spacing: -.75px; }
.clock span:last-child { letter-spacing: -.5px; }
.t5 { margin-left: 32px; }
.desk { width: 2px; height: 60px; margin-left: 31px; background: #8a8582; }
```
